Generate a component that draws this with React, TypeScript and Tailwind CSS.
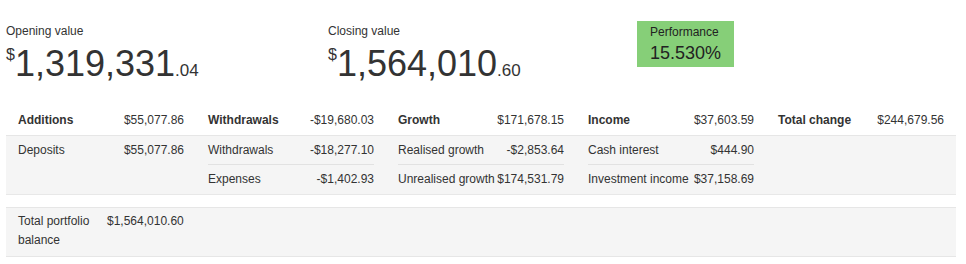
import React from "react";

const font = { fontFamily: '"Liberation Sans", Arial, sans-serif' };

function Money({ whole, cents }: { whole: string; cents: string }) {
  return (
    <div className="leading-none whitespace-nowrap text-[#333]">
      <span className="text-[16px] align-top relative top-[1px]">$</span>
      <span className="text-[36px]">{whole}</span>
      <span className="text-[17px]">{cents}</span>
    </div>
  );
}

type Sub = { label: string; value: string };
type Col = { title: string; total: string; subs: Sub[] };

const cols: Col[] = [
  { title: "Additions", total: "$55,077.86", subs: [{ label: "Deposits", value: "$55,077.86" }] },
  {
    title: "Withdrawals",
    total: "-$19,680.03",
    subs: [
      { label: "Withdrawals", value: "-$18,277.10" },
      { label: "Expenses", value: "-$1,402.93" },
    ],
  },
  {
    title: "Growth",
    total: "$171,678.15",
    subs: [
      { label: "Realised growth", value: "-$2,853.64" },
      { label: "Unrealised growth", value: "$174,531.79" },
    ],
  },
  {
    title: "Income",
    total: "$37,603.59",
    subs: [
      { label: "Cash interest", value: "$444.90" },
      { label: "Investment income", value: "$37,158.69" },
    ],
  },
  { title: "Total change", total: "$244,679.56", subs: [] },
];

export default function App() {
  return (
    <div className="w-[966px] h-[264px] bg-white text-[#333] text-[12px] overflow-hidden" style={font}>
      {/* Top summary */}
      <div className="flex pl-[6px] pt-[21px] h-[106px]">
        <div className="w-[322px] pt-[2px]">
          <div className="leading-[16px]">Opening value</div>
          <div className="mt-[7px]">
            <Money whole="1,319,331" cents=".04" />
          </div>
        </div>
        <div className="w-[309px] pt-[2px]">
          <div className="leading-[16px]">Closing value</div>
          <div className="mt-[7px]">
            <Money whole="1,564,010" cents=".60" />
          </div>
        </div>
        <div className="w-[97px] h-[46px] bg-[#86cf78] pl-[13px] pt-[3px] text-[#222]">
          <div className="leading-[16px]">Performance</div>
          <div className="text-[18px] leading-[22px] mt-[2px]">15.530%</div>
        </div>
      </div>

      {/* Breakdown table */}
      <div className="mx-[6px] w-[950px]">
        <div className="grid grid-cols-5 h-[30px] border-b border-[#e6e6e6] items-center">
          {cols.map((c) => (
            <div key={c.title} className="flex justify-between px-3 leading-[29px]">
              <span className="font-bold">{c.title}</span>
              <span>{c.total}</span>
            </div>
          ))}
        </div>
        <div className="grid grid-cols-5 bg-[#f5f5f5] border-b border-[#e8e8e8] h-[59px]">
          {cols.map((c) => (
            <div key={c.title}>
              {c.subs.map((s, i) => (
                <div
                  key={s.label}
                  className={
                    "mx-3 flex justify-between whitespace-nowrap leading-[28px] " +
                    (i < c.subs.length - 1 ? "border-b border-[#e2e2e2]" : "")
                  }
                >
                  <span>{s.label}</span>
                  <span>{s.value}</span>
                </div>
              ))}
            </div>
          ))}
        </div>

        <div className="mt-3 bg-[#f5f5f5] border-y border-[#e6e6e6] flex pt-[4px] pb-[6px] leading-[19px]">
          <div className="ml-3 w-[77px]">Total portfolio balance</div>
          <div className="ml-3">$1,564,010.60</div>
        </div>
      </div>
    </div>
  );
}
